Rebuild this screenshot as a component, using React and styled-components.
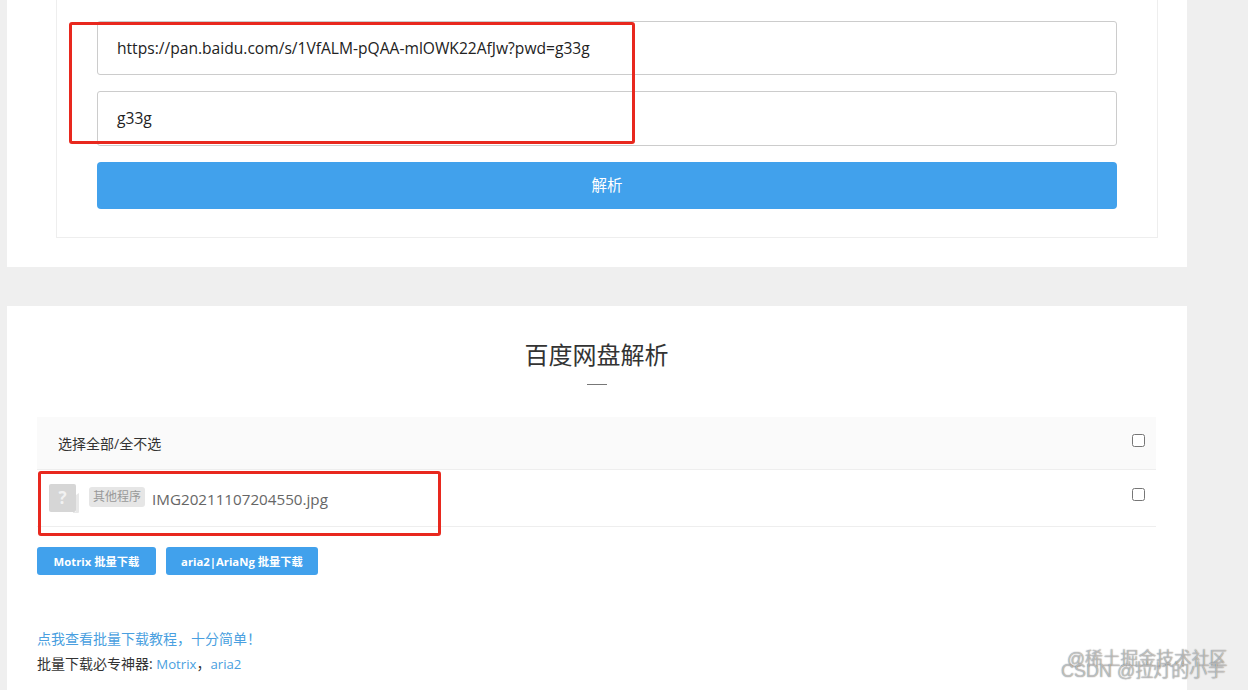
import React from "react";
import styled, { createGlobalStyle } from "styled-components";

const Global = createGlobalStyle`
  html, body { margin: 0; padding: 0; height: 690px; overflow: hidden; background: #efefef; }
  body { font-family: "Open Sans", "Noto Sans CJK SC", sans-serif; }
  * { box-sizing: border-box; }
`;
const Page = styled.div`
  position: relative;
  width: 1248px;
  height: 690px;
  overflow: hidden;
  padding-left: 7px;
  display: flex;
  flex-direction: column;
  gap: 39px;
`;
const Panel = styled.section`
  width: 1180px;
  background: #fff;
  flex: none;
`;
const FormPanel = styled(Panel)`
  height: 267px;
  padding: 0 29px 29px 49px;
`;
const FormBox = styled.div`
  height: 238px;
  border: 1px solid #eeeeee;
  border-top: 0;
  padding: 21px 40px 0;
  display: flex;
  flex-direction: column;
`;
const Field = styled.div`
  height: ${(p) => p.$h}px;
  margin-bottom: 16px;
  border: 1px solid #cccccc;
  border-radius: 3px;
  padding: ${(p) => p.$pt}px 0 0 19px;
  font-size: 15.6px;
  line-height: 22px;
  color: #222;
`;
const Submit = styled.button`
  height: 47px;
  border: 0;
  border-radius: 4px;
  background: #41a1ec;
  color: #fff;
  padding: 0 0 2px;
  font: 15.5px "Open Sans", "Noto Sans CJK SC", sans-serif;
`;
const ResultPanel = styled(Panel)`
  height: 400px;
  padding: 0 31px 0 30px;
`;
const Title = styled.h2`
  margin: 0;
  padding-top: 32px;
  text-align: center;
  font-weight: 400;
  font-size: 24px;
  line-height: 34px;
  color: #333;
`;
const Dash = styled.div`
  width: 20px;
  height: 1px;
  background: #777;
  margin: 12px auto 32px;
`;
const Row = styled.div`
  display: flex;
  align-items: center;
  justify-content: space-between;
  height: ${(p) => p.$h}px;
  border-bottom: 1px solid #eeeeee;
  background: ${(p) => (p.$head ? "#fafafa" : "#fff")};
  padding: ${(p) => (p.$head ? "0 11px 1px 21px" : "0 11px 1px 12px")};
  font-size: 14px;
  color: #333;
`;
const Check = styled.span`
  width: 13px;
  height: 13px;
  border: 1px solid #767676;
  border-radius: 2.5px;
  background: #fff;
  flex: none;
  align-self: center;
  margin-top: ${(p) => p.$mt}px;
`;
const FileCell = styled.div`
  display: flex;
  align-items: center;
  padding-top: 3px;
`;
const Tag = styled.span`
  width: 56px;
  height: 20px;
  margin: -4px 7px 0 9px;
  border-radius: 3px;
  background: #e6e6e6;
  color: #999;
  font-size: 12px;
  line-height: 20px;
  text-align: center;
`;
const FileName = styled.span`
  font-size: 15.2px;
  line-height: 22px;
  color: #666;
`;
const Actions = styled.div`
  display: flex;
  gap: 10px;
  margin-top: 20px;
`;
const Action = styled.button`
  height: 28px;
  width: ${(p) => p.$w}px;
  padding: 0;
  border: 0;
  border-radius: 3px;
  background: #41a1ec;
  color: #fff;
  font: 700 11.3px "Open Sans", "Noto Sans CJK SC", sans-serif;
`;
const Notes = styled.div`
  margin-top: 51px;
  font-size: 14px;
  line-height: 25px;
  color: #333;
`;
const Link = styled.a`
  color: #4a9fe0;
  font-size: ${(p) => p.$size || 14}px;
`;
const Mark = styled.div`
  position: absolute;
  left: ${(p) => p.$x}px;
  top: ${(p) => p.$y}px;
  width: ${(p) => p.$w}px;
  height: ${(p) => p.$h}px;
  border: 3px solid #e8281e;
  border-radius: 3px;
  pointer-events: none;
`;
const Watermark = styled.div`
  position: absolute;
  left: ${(p) => p.$x}px;
  top: ${(p) => p.$y}px;
  font-family: "Liberation Sans", "Noto Sans CJK SC", sans-serif;
  font-size: ${(p) => p.$s}px;
  line-height: 22px;
  white-space: nowrap;
  color: rgba(255, 255, 255, 0.55);
  text-shadow: 0 0 1px rgba(70, 70, 70, 0.9);
`;

const FileIcon = () => (
  <svg width="31" height="30" viewBox="0 0 31 30" style={{ flex: "none" }}>
    <path d="M27 11l3 -2v19a1 1 0 0 1 -1 1H24v-1h3z" fill="#e8e8e8" />
    <rect x="0" y="0" width="27" height="28" rx="2" fill="#d6d6d6" />
    <text x="13.5" y="20" textAnchor="middle" fontSize="17" fontWeight="700" fill="#f2f2f2" fontFamily="Open Sans, sans-serif">?</text>
  </svg>
);

export default function App() {
  return (
    <>
      <Global />
      <Page>
        <FormPanel>
          <FormBox>
            <Field $h={54} $pt={15}>https://pan.baidu.com/s/1VfALM-pQAA-mlOWK22AfJw?pwd=g33g</Field>
            <Field $h={55} $pt={15}>g33g</Field>
            <Submit>解析</Submit>
          </FormBox>
        </FormPanel>
        <ResultPanel>
          <Title>百度网盘解析</Title>
          <Dash />
          <Row $head $h={53}>
            <span>选择全部/全不选</span>
            <Check $mt={-4} />
          </Row>
          <Row $h={57}>
            <FileCell>
              <FileIcon />
              <Tag>其他程序</Tag>
              <FileName>IMG20211107204550.jpg</FileName>
            </FileCell>
            <Check $mt={-7} />
          </Row>
          <Actions>
            <Action $w={119}>Motrix 批量下载</Action>
            <Action $w={152}>aria2|AriaNg 批量下载</Action>
          </Actions>
          <Notes>
            <div><Link>点我查看批量下载教程，十分简单！</Link></div>
            <div>批量下载必专神器: <Link $size={13.2}>Motrix</Link>，<Link $size={13.2}>aria2</Link></div>
          </Notes>
        </ResultPanel>
        <Mark $x={69} $y={22} $w={566} $h={122} />
        <Mark $x={38} $y={471} $w={403} $h={65} />
        <Watermark $x={1067} $y={648} $s={17.8}>@稀土掘金技术社区</Watermark>
        <Watermark $x={1061} $y={660} $s={18}>CSDN @拉灯的小手</Watermark>
      </Page>
    </>
  );
}
